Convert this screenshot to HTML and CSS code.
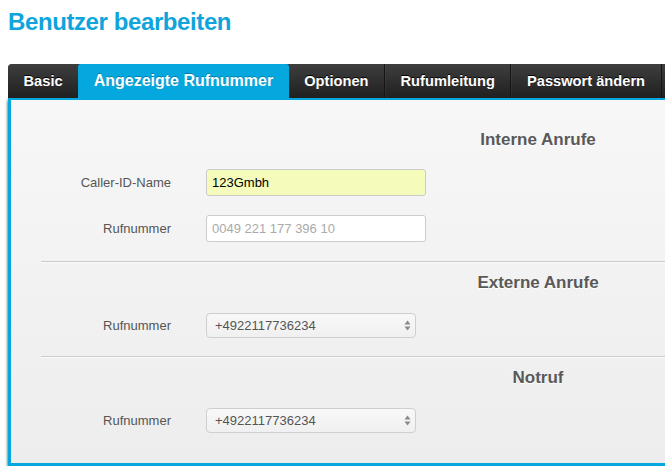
FILE: index.html
```html
<!DOCTYPE html>
<html lang="de">
<head>
<meta charset="utf-8">
<title>Benutzer bearbeiten</title>
<link rel="stylesheet" href="styles.css">
</head>
<body>
<div class="page">
  <h1 class="title">Benutzer bearbeiten</h1>
  <div class="tabs">
    <div class="tab first">Basic</div>
    <div class="tab active">Angezeigte Rufnummer</div>
    <div class="tab sep">Optionen</div>
    <div class="tab sep">Rufumleitung</div>
    <div class="tab sep">Passwort ändern</div>
  </div>
  <div class="panel">
    <h2 class="section-title">Interne Anrufe</h2>
    <div class="row first-row">
      <label class="label">Caller-ID-Name</label>
      <input class="field filled" type="text" value="123Gmbh">
    </div>
    <div class="row">
      <label class="label">Rufnummer</label>
      <input class="field" type="text" placeholder="0049 221 177 396 10">
    </div>
    <div class="divider"></div>
    <h2 class="section-title">Externe Anrufe</h2>
    <div class="row select-row">
      <label class="label">Rufnummer</label>
      <div class="select-wrap">
        <select class="select"><option>+4922117736234</option></select>
        <svg class="arrows" width="7" height="11" viewBox="0 0 7 11"><path d="M3.5 0.5 L6.5 4.5 L0.5 4.5 Z M3.5 10.5 L6.5 6.5 L0.5 6.5 Z" fill="#8a8a8a"/></svg>
      </div>
    </div>
    <div class="divider second"></div>
    <h2 class="section-title">Notruf</h2>
    <div class="row select-row">
      <label class="label">Rufnummer</label>
      <div class="select-wrap">
        <select class="select"><option>+4922117736234</option></select>
        <svg class="arrows" width="7" height="11" viewBox="0 0 7 11"><path d="M3.5 0.5 L6.5 4.5 L0.5 4.5 Z M3.5 10.5 L6.5 6.5 L0.5 6.5 Z" fill="#8a8a8a"/></svg>
      </div>
    </div>
  </div>
</div>
</body>
</html>
```
FILE: styles.css
```css
html, body {
  margin: 0;
  padding: 0;
  overflow: hidden;
  background: #ffffff;
  font-family: "Liberation Sans", Arial, Helvetica, sans-serif;
}

.page {
  width: 1057px;
  padding: 8px 0 0 8px;
}

.title {
  margin: 0;
  font-size: 24px;
  line-height: 28px;
  font-weight: bold;
  letter-spacing: -0.4px;
  color: #0fa4db;
}

.tabs {
  display: flex;
  margin-top: 28px;
  height: 34px;
  background: linear-gradient(#3e3e3e, #202020);
  border-radius: 4px 0 0 0;
  overflow: hidden;
}

.tab {
  padding: 0 15.5px;
  line-height: 34px;
  font-size: 14.67px;
  font-weight: bold;
  color: #ffffff;
  white-space: nowrap;
  text-shadow: 0 -1px 0 #000000;
  background: linear-gradient(#3e3e3e, #202020);
}

.tab.first {
  border-radius: 4px 0 0 0;
}

.tab.sep {
  border-right: 1px solid #151515;
  box-shadow: inset 1px 0 0 rgba(255, 255, 255, 0.04);
}

.tab.active {
  background: #04a7de;
  font-size: 16px;
  border-radius: 3px 3px 0 0;
  text-shadow: 0 -1px 0 rgba(0, 0, 0, 0.25);
}

.panel {
  border-top: 2px solid #04a7de;
  border-left: 3px solid #04a7de;
  border-bottom: 3px solid #04a7de;
  background: linear-gradient(#f7f7f7, #ededed);
  padding: 30px 0 30px 0;
  box-shadow: 0 2px 3px rgba(0, 0, 0, 0.85);
}

.section-title {
  margin: 0;
  font-size: 17px;
  line-height: 20px;
  font-weight: bold;
  color: #595959;
  text-align: center;
  text-shadow: 0 1px 0 #ffffff;
}

.row {
  display: grid;
  grid-template-columns: 160px 220px;
  column-gap: 35px;
  align-items: center;
  margin-top: 19px;
}

.select-row {
  grid-template-columns: 160px 210px;
  margin-top: 20px;
}

.label {
  text-align: right;
  font-size: 13px;
  color: #555555;
}

.field {
  box-sizing: border-box;
  width: 220px;
  height: 27px;
  margin: 0;
  padding: 0 5px;
  border: 1px solid #cccccc;
  border-radius: 3px;
  background: #ffffff;
  font-family: "Liberation Sans", Arial, Helvetica, sans-serif;
  font-size: 13px;
  color: #000000;
  outline: none;
}

.field::placeholder {
  color: #aaaaaa;
}

.field.filled {
  background: #f4fbbb;
}

.divider {
  margin: 19px 0 10px 30px;
  border-top: 1px solid #cbcbcb;
  border-bottom: 1px solid #fafafa;
}

.divider.second {
  margin-top: 18px;
}

.select-wrap {
  position: relative;
  width: 210px;
  height: 25px;
}

.select {
  -webkit-appearance: none;
  appearance: none;
  box-sizing: border-box;
  width: 210px;
  height: 25px;
  margin: 0;
  padding: 0 0 0 8px;
  border: 1px solid #cfcfcf;
  border-radius: 4px;
  background: linear-gradient(#f8f8f8, #f0f0f0);
  font-family: "Liberation Sans", Arial, Helvetica, sans-serif;
  font-size: 13px;
  color: #555555;
  outline: none;
}

.arrows {
  position: absolute;
  right: 5px;
  top: 7px;
}
```
